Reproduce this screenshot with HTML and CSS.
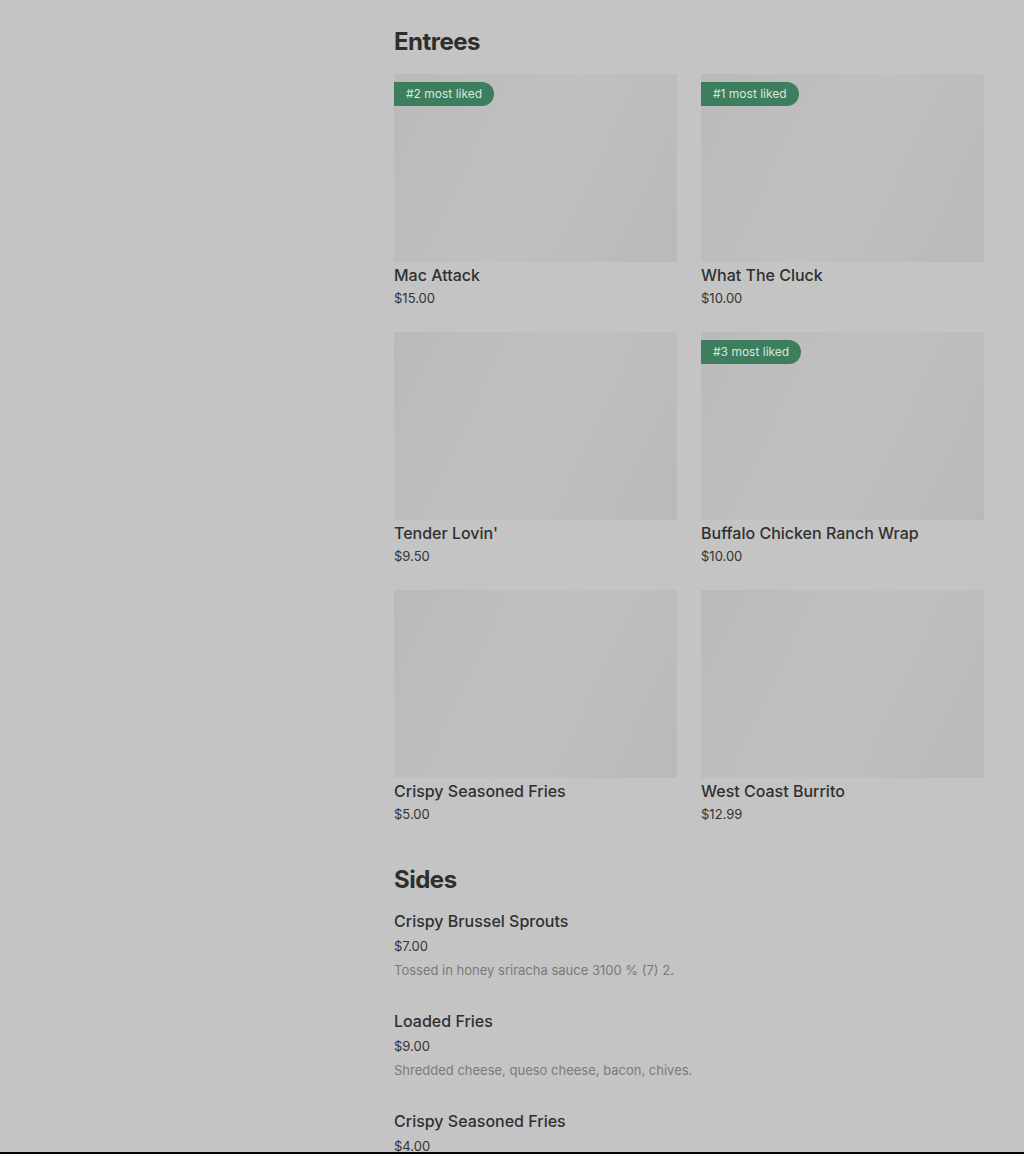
FILE: index.html
```html
<!DOCTYPE html>
<html lang="en">

<head>
    <meta charset="UTF-8" />
    <meta name="viewport" content="width=device-width, initial-scale=1.0" />
    <title>Menu</title>
    <link rel="stylesheet" href="styles.css">
</head>

<body class="page">

    <div class="layout">
        <aside class="side-col"></aside>

        <main class="menu">
            <section class="menu-section">
                <h2 class="section-title">Entrees</h2>
                <div class="card-grid">
                    <div class="card">
                        <div class="card-img"><span class="badge">#2 most liked</span></div>
                        <p class="card-name">Mac Attack</p>
                        <p class="card-price">$15.00</p>
                    </div>
                    <div class="card">
                        <div class="card-img"><span class="badge">#1 most liked</span></div>
                        <p class="card-name">What The Cluck</p>
                        <p class="card-price">$10.00</p>
                    </div>
                    <div class="card">
                        <div class="card-img"></div>
                        <p class="card-name">Tender Lovin'</p>
                        <p class="card-price">$9.50</p>
                    </div>
                    <div class="card">
                        <div class="card-img"><span class="badge">#3 most liked</span></div>
                        <p class="card-name">Buffalo Chicken Ranch Wrap</p>
                        <p class="card-price">$10.00</p>
                    </div>
                    <div class="card">
                        <div class="card-img"></div>
                        <p class="card-name">Crispy Seasoned Fries</p>
                        <p class="card-price">$5.00</p>
                    </div>
                    <div class="card">
                        <div class="card-img"></div>
                        <p class="card-name">West Coast Burrito</p>
                        <p class="card-price">$12.99</p>
                    </div>
                </div>
            </section>

            <section class="menu-section sides">
                <h2 class="section-title">Sides</h2>
                <div class="item-list">
                    <div class="item">
                        <p class="item-name">Crispy Brussel Sprouts</p>
                        <p class="item-price">$7.00</p>
                        <p class="item-desc">Tossed in honey sriracha sauce 3100 % (7) 2.</p>
                    </div>
                    <div class="item">
                        <p class="item-name">Loaded Fries</p>
                        <p class="item-price">$9.00</p>
                        <p class="item-desc">Shredded cheese, queso cheese, bacon, chives.</p>
                    </div>
                    <div class="item">
                        <p class="item-name">Crispy Seasoned Fries</p>
                        <p class="item-price">$4.00</p>
                    </div>
                </div>
            </section>
        </main>
    </div>

    <div class="bottom-edge"></div>

</body>

</html>
```

FILE: styles.css
```css
.page {
    margin: 0;
    background-color: rgb(196, 196, 196);
    font-family: Inter, "Liberation Sans", sans-serif;
    color: rgb(48, 48, 48);
}

.layout {
    display: grid;
    grid-template-columns: 394px 590px;
}

.menu {
    padding-top: 26px;
    padding-bottom: 40px;
}

.section-title {
    margin: 0;
    font-size: 24px;
    line-height: 32px;
    font-weight: 700;
    letter-spacing: -0.5px;
    color: rgb(46, 46, 46);
}

.card-grid {
    margin-top: 16px;
    display: grid;
    grid-template-columns: 283px 283px;
    column-gap: 24px;
    row-gap: 24px;
}

.card-img {
    position: relative;
    height: 188px;
    background: linear-gradient(115deg, rgb(186, 186, 186) 0%, rgb(192, 192, 192) 50%, rgb(185, 185, 185) 100%);
}

.badge {
    position: absolute;
    top: 8px;
    left: 0;
    height: 24px;
    line-height: 24px;
    padding: 0 12px;
    border-radius: 0 12px 12px 0;
    background-color: rgb(60, 126, 94);
    color: rgb(214, 232, 222);
    font-size: 12px;
    white-space: nowrap;
}

.card-name {
    margin: 1px 0 0 0;
    font-size: 16px;
    line-height: 24px;
    font-weight: 500;
}

.card-price {
    margin: 1px 0 0 0;
    font-size: 13px;
    line-height: 20px;
    color: rgb(52, 52, 52);
}

.sides {
    margin-top: 40px;
}

.item-list {
    margin-top: 13px;
    display: flex;
    flex-direction: column;
    gap: 29px;
}

.item-name {
    margin: 0;
    font-size: 16px;
    line-height: 24px;
    font-weight: 500;
}

.item-price {
    margin: 3px 0 0 0;
    font-size: 13px;
    line-height: 20px;
    color: rgb(52, 52, 52);
}

.item-desc {
    margin: 4px 0 0 0;
    font-size: 13px;
    line-height: 20px;
    color: rgb(122, 122, 122);
}

.bottom-edge {
    position: fixed;
    left: 0;
    right: 0;
    bottom: 0;
    height: 2px;
    background-color: rgb(0, 0, 0);
}
```
